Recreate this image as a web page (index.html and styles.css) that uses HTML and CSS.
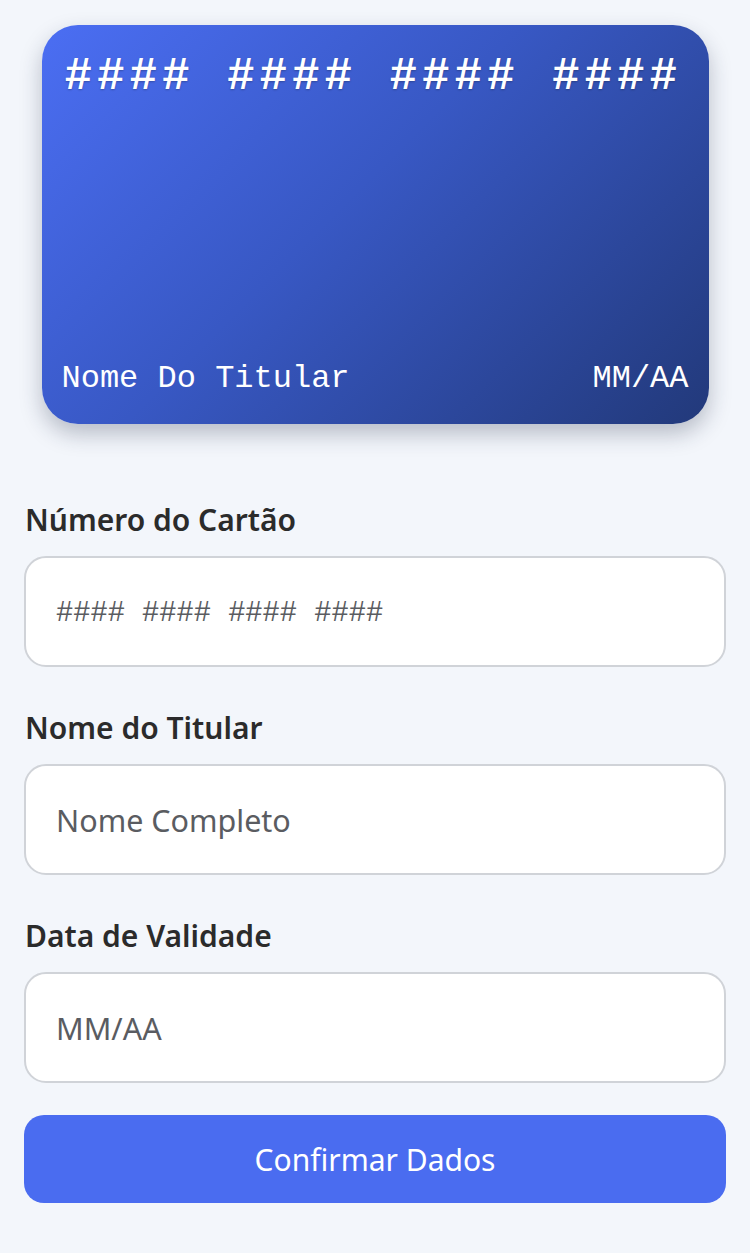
FILE: index.html
```html
<!DOCTYPE html>
<html lang="pt">
<head>
<meta charset="utf-8">
<title>Cartão</title>
<link rel="stylesheet" href="styles.css">
</head>
<body>
<main class="page">
  <section class="card">
    <div class="card-number">#### #### #### ####</div>
    <div class="card-bottom">
      <span class="card-name">Nome Do Titular</span>
      <span class="card-exp">MM/AA</span>
    </div>
  </section>
  <form class="form">
    <div class="field">
      <label class="label" for="num">Número do Cartão</label>
      <input class="input mono" id="num" type="text" placeholder="#### #### #### ####">
    </div>
    <div class="field">
      <label class="label" for="nome">Nome do Titular</label>
      <input class="input" id="nome" type="text" placeholder="Nome Completo">
    </div>
    <div class="field">
      <label class="label" for="val">Data de Validade</label>
      <input class="input" id="val" type="text" placeholder="MM/AA">
    </div>
    <button class="button" type="button">Confirmar Dados</button>
  </form>
</main>
</body>
</html>
```

FILE: styles.css
```css
* { box-sizing: border-box; }
html, body { margin: 0; padding: 0; }
body {
  background: #f3f6fb;
  font-family: "Noto Sans", "Open Sans", sans-serif;
  color: #2b2b2b;
}
.page {
  padding: 25px 24px 40px;
}
.card {
  width: 667px;
  height: 399px;
  margin: 0 auto;
  border-radius: 36px;
  background: linear-gradient(135deg, #4b6ef3 0%, #3858c4 45%, #22397a 100%);
  box-shadow: 0 10px 22px rgba(30, 40, 70, 0.28);
  padding: 26px 20px 25px 20px;
  display: flex;
  flex-direction: column;
  justify-content: space-between;
  color: #fff;
}
.card-number {
  font-family: "Liberation Mono", "Courier New", monospace;
  font-weight: bold;
  font-size: 46px;
  letter-spacing: 4.9px;
  line-height: 52px;
  padding-left: 3px;
  white-space: nowrap;
  text-shadow: 0 1px 2px rgba(0,0,0,0.25);
}
.card-bottom {
  display: flex;
  justify-content: space-between;
  align-items: baseline;
  font-family: "Liberation Mono", "Courier New", monospace;
  font-size: 32px;
  line-height: 40px;
}
.form {
  margin-top: 76px;
  display: flex;
  flex-direction: column;
}
.field {
  display: flex;
  flex-direction: column;
  margin-bottom: 41px;
}
.field:last-of-type { margin-bottom: 32px; }
.label {
  font-size: 30px;
  font-weight: 600;
  line-height: 40px;
  color: #2b2b2b;
  margin-bottom: 16px;
  padding-left: 1px;
}
.input {
  width: 100%;
  height: 111px;
  padding: 0 30px;
  border: 2px solid #d0d3d8;
  border-radius: 22px;
  background: #fff;
  font-family: "Noto Sans", "Open Sans", sans-serif;
  font-size: 30.5px;
  color: #333;
  outline: none;
}
.input::placeholder { color: #5a5c61; opacity: 1; }
.input.mono {
  font-family: "Liberation Mono", "Courier New", monospace;
  font-size: 28.7px;
  padding-top: 4px;
}
.button {
  width: 100%;
  height: 88px;
  border: none;
  border-radius: 20px;
  background: #4a6cf0;
  color: #fff;
  font-family: "Noto Sans", "Open Sans", sans-serif;
  font-size: 30px;
  font-weight: 400;
  cursor: pointer;
}
```
